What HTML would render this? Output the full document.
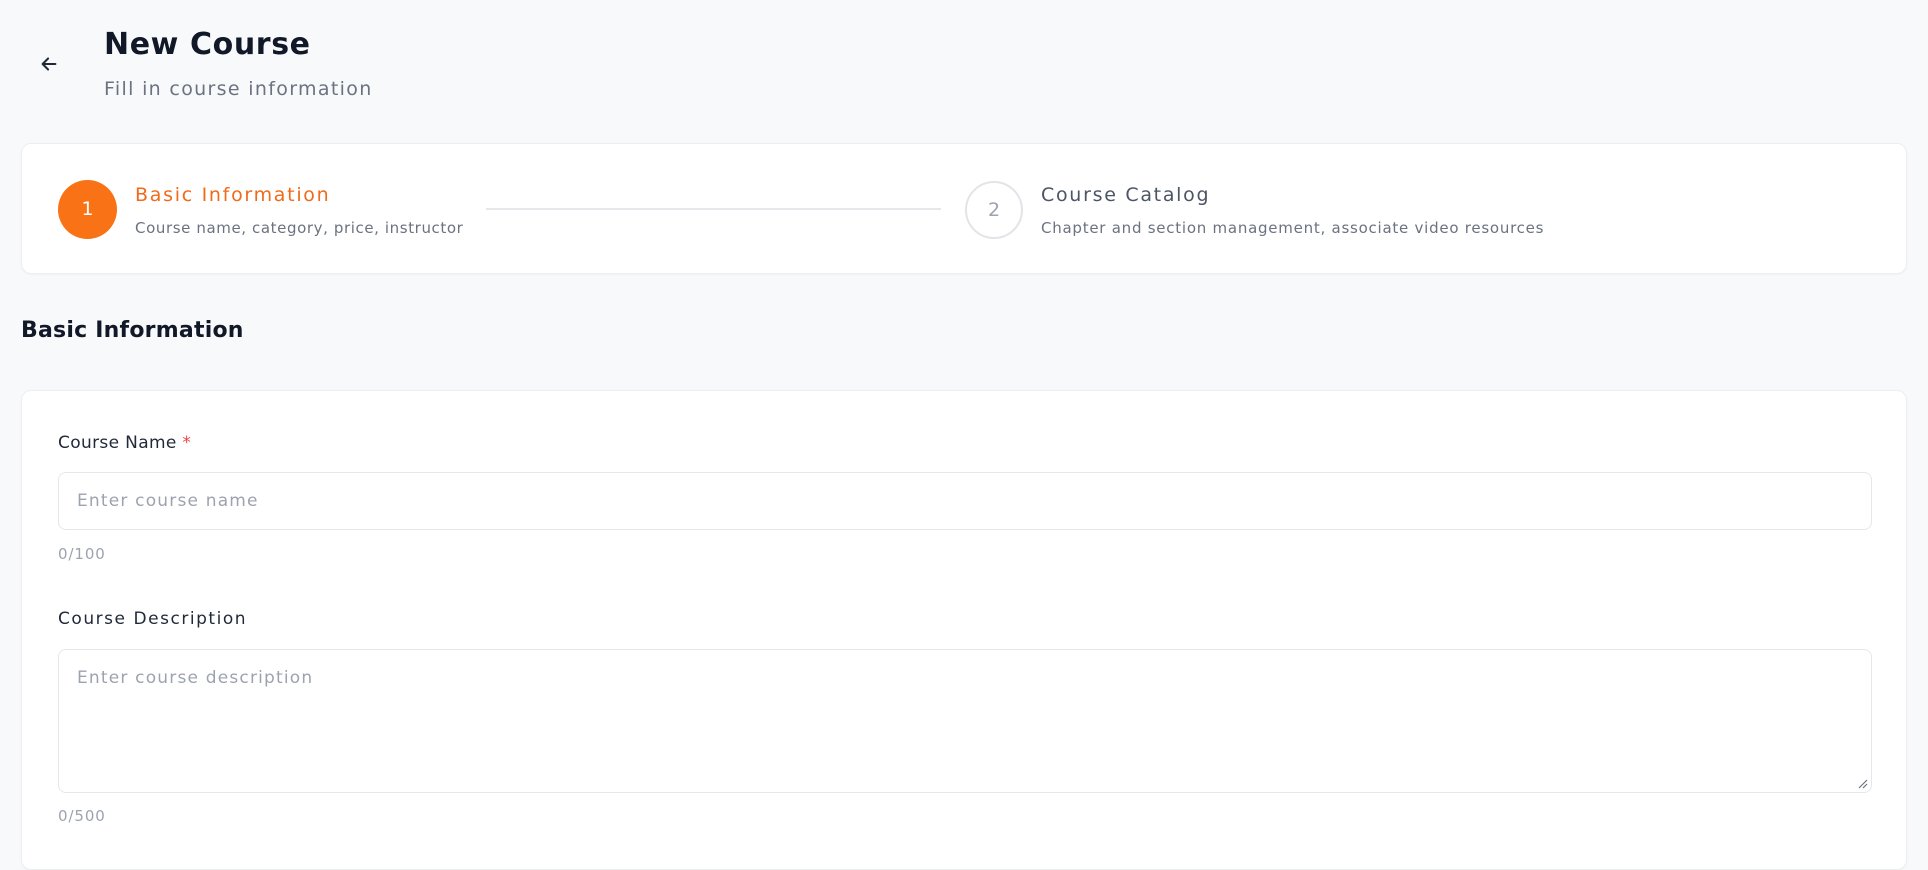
<!DOCTYPE html>
<html><head><meta charset="utf-8"><style>
*{box-sizing:border-box;margin:0;padding:0}
body{width:1928px;height:852px;overflow:hidden;background:#f8f9fb;font-family:"DejaVu Sans","Liberation Sans",sans-serif;position:relative;color:#111827;letter-spacing:0.06em}
.abs{position:absolute;white-space:nowrap}
.card{position:absolute;background:#fff;border:1px solid #eceef1;border-radius:10px;box-shadow:0 1px 2px rgba(0,0,0,.03)}
.inp{position:absolute;border:1px solid #e5e7eb;border-radius:8px;background:#fff}
</style></head><body>
<svg class="abs" style="left:38px;top:53px" width="22" height="22" viewBox="0 0 24 24" fill="none" stroke="#1f2937" stroke-width="2.2" stroke-linecap="round" stroke-linejoin="round"><path d="M19 12H5M11 6l-6 6 6 6"/></svg>
<div class="abs" style="left:104px;top:27px;font-size:30px;font-weight:bold;letter-spacing:0.02em">New Course</div>
<div class="abs" style="left:104px;top:78px;font-size:19px;color:#6b7280;letter-spacing:0.07em">Fill in course information</div>

<div class="card" style="left:21px;top:143px;width:1886px;height:131px"></div>
<div class="abs" style="left:58px;top:180px;width:59px;height:59px;border-radius:50%;background:#f97316;color:#fff;font-size:19px;line-height:59px;text-align:center;letter-spacing:0">1</div>
<div class="abs" style="left:135px;top:184px;font-size:19px;color:#f06a1a;letter-spacing:0.09em">Basic Information</div>
<div class="abs" style="left:135px;top:219px;font-size:15px;color:#6b7280;letter-spacing:0.04em">Course name, category, price, instructor</div>
<div class="abs" style="left:486px;top:208px;width:455px;height:2px;background:#e5e7eb"></div>
<div class="abs" style="left:965px;top:181px;width:58px;height:58px;border-radius:50%;border:2px solid #e2e4e8;color:#9ca3af;font-size:19px;line-height:54px;text-align:center;letter-spacing:0">2</div>
<div class="abs" style="left:1041px;top:184px;font-size:19px;color:#4b5563;letter-spacing:0.09em">Course Catalog</div>
<div class="abs" style="left:1041px;top:219px;font-size:15px;color:#6b7280;letter-spacing:0.05em">Chapter and section management, associate video resources</div>

<div class="abs" style="left:21px;top:318px;font-size:22px;font-weight:bold;letter-spacing:0.01em">Basic Information</div>

<div class="card" style="left:21px;top:390px;width:1886px;height:480px"></div>
<div class="abs" style="left:58px;top:433px;font-size:17px;color:#1f2937;letter-spacing:0.02em">Course Name <span style="color:#ef4444">*</span></div>
<div class="inp" style="left:58px;top:472px;width:1814px;height:58px"></div>
<div class="abs" style="left:77px;top:491px;font-size:17px;color:#9ca3af;letter-spacing:0.07em">Enter course name</div>
<div class="abs" style="left:58px;top:545px;font-size:15px;color:#9ca3af;letter-spacing:0.06em">0/100</div>
<div class="abs" style="left:58px;top:609px;font-size:17px;color:#1f2937;letter-spacing:0.09em">Course Description</div>
<div class="inp" style="left:58px;top:649px;width:1814px;height:144px"></div>
<div class="abs" style="left:77px;top:668px;font-size:17px;color:#9ca3af;letter-spacing:0.07em">Enter course description</div>
<svg class="abs" style="left:1856px;top:777px" width="12" height="12" viewBox="0 0 12 12" stroke="#6b7280" stroke-width="1.2"><path d="M11 3L3 11M11 7L7 11"/></svg>
<div class="abs" style="left:58px;top:807px;font-size:15px;color:#9ca3af;letter-spacing:0.06em">0/500</div>
</body></html>
